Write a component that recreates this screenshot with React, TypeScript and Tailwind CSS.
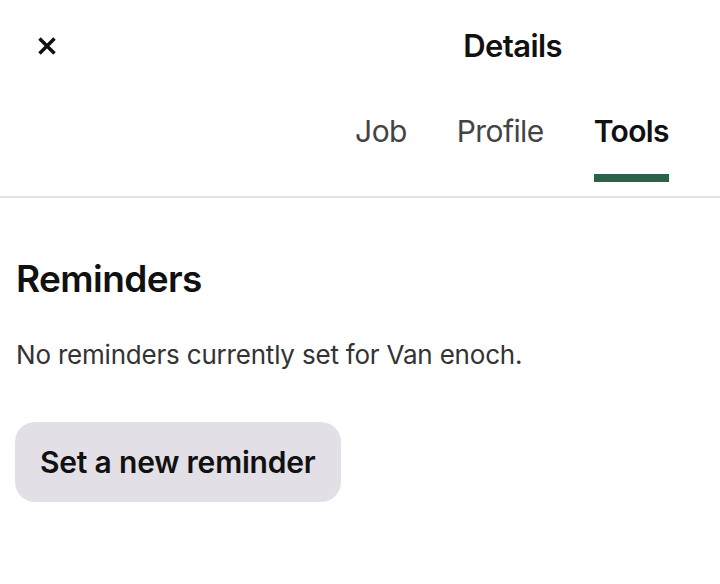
const tabs = ["Job", "Profile", "Tools"];

export default function App() {
  const active = "Tools";
  return (
    <div className="w-[720px] h-[584px] bg-white text-[#111] font-['Inter',sans-serif]">
      <div className="flex items-center h-[92px] px-[37px]">
        <button className="w-[20px] h-[20px] flex items-center justify-center">
          <svg width="20" height="20" viewBox="0 0 20 20" fill="none">
            <path d="M2.5 2.5L17.5 17.5M17.5 2.5L2.5 17.5" stroke="#111" strokeWidth="3.5" />
          </svg>
        </button>
        <div className="flex-1 flex justify-end pr-[121px]">
          <h1 className="text-[31px] leading-[36px] font-semibold tracking-[-0.6px]">Details</h1>
        </div>
      </div>

      <div className="flex justify-end gap-[50px] pr-[51px] h-[106px] border-b-2 border-[#e3e3e6]">
        {tabs.map((t) => (
          <div key={t} className="flex flex-col items-center pt-[21px]">
            <span
              className={
                "text-[30px] leading-[36px] tracking-[-0.6px] " +
                (t === active ? "font-semibold text-[#111]" : "text-[#444]")
              }
            >
              {t}
            </span>
            {t === active && <div className="mt-[25px] h-[8px] w-full bg-[#2b6349]" />}
          </div>
        ))}
      </div>

      <div className="px-[15px] pt-[59px]">
        <h2 className="pl-[1px] text-[37px] font-semibold tracking-[-0.6px] leading-[44px]">Reminders</h2>
        <p className="pl-[1px] mt-[38px] text-[26px] leading-[32px] text-[#333] tracking-[-0.2px]">
          No reminders currently set for Van enoch.
        </p>
        <button className="mt-[51px] h-[80px] px-[25px] rounded-[20px] bg-[#e2e0e6] text-[30px] leading-[36px] font-semibold tracking-[-0.2px]">
          Set a new reminder
        </button>
      </div>
    </div>
  );
}
